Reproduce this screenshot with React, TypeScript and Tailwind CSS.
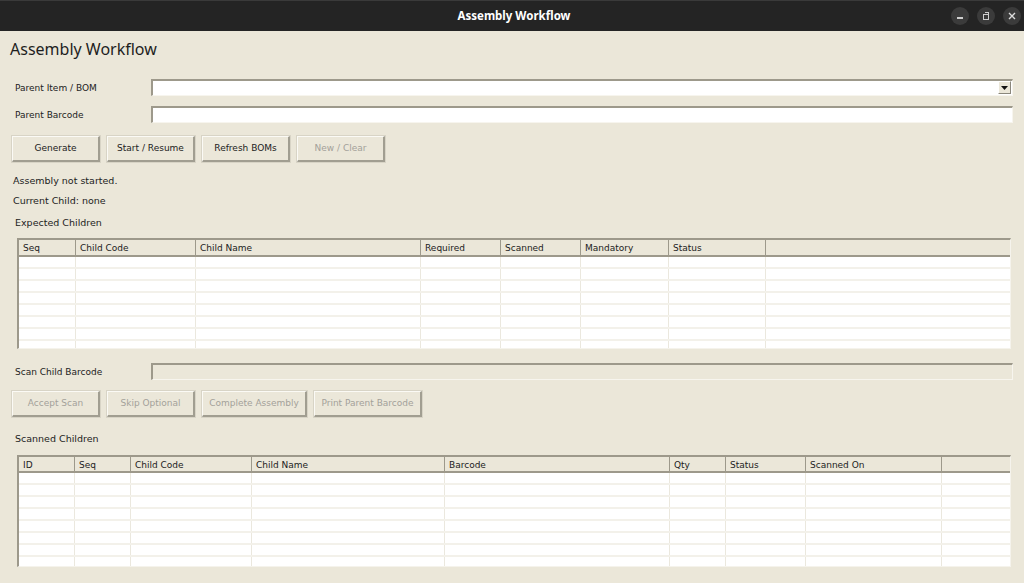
import React from "react";

const FONT = { fontFamily: '"DejaVu Sans", "Liberation Sans", sans-serif' };

function Entry({ disabled, combo }: { disabled?: boolean; combo?: boolean }) {
  return (
    <div
      className={`flex-1 h-[17px] border-t-2 border-l-2 border-t-[#9d998b] border-l-[#9d998b] border-b border-r border-b-[#f7f5ee] border-r-[#f7f5ee] flex justify-end ${
        disabled ? "bg-[#ebe7d9]" : "bg-white"
      }`}
    >
      {combo && (
        <div className="w-[13px] h-[13px] mt-[0px] mr-[1px] bg-[#ebe7d9] border border-t-white border-l-white border-b-[#8a877c] border-r-[#8a877c] flex items-center justify-center">
          <svg width="7" height="4" viewBox="0 0 7 4">
            <polygon points="0,0 7,0 3.5,4" fill="#111" />
          </svg>
        </div>
      )}
    </div>
  );
}

function Btn({ label, w, disabled }: { label: string; w: number; disabled?: boolean }) {
  return (
    <div
      className={`h-[26px] flex items-center justify-center bg-[#ebe7d9] border-t border-l border-t-[#fbfaf5] border-l-[#fbfaf5] border-b-2 border-r-2 border-b-[#a19e91] border-r-[#a19e91] outline outline-1 outline-[#d8d4c6] text-[9px] ${
        disabled ? "text-[#a3a199]" : "text-[#222]"
      }`}
      style={{ width: w }}
    >
      {label}
    </div>
  );
}

function Table({ cols, height, headerH }: { cols: [string, number | null][]; height: number; headerH: number }) {
  const rows = Array.from({ length: 9 });
  return (
    <div
      className="mx-[17px] w-[994px] border-t-2 border-l-2 border-t-[#9d998b] border-l-[#9d998b] border-b border-r border-b-[#f5f3ec] border-r-[#f5f3ec] bg-white flex flex-col overflow-hidden"
      style={{ height }}
    >
      <div className="flex bg-[#ebe7d9] border-b-2 border-b-[#9d998b] shrink-0" style={{ height: headerH }}>
        {cols.map(([name, w], i) => (
          <div
            key={i}
            className={`flex items-center pl-[4px] pt-[3px] text-[9px] text-[#222] border-r border-r-[#9d998b] ${w === null ? "flex-1 border-r-0" : "shrink-0"}`}
            style={w === null ? {} : { width: w }}
          >
            {name}
          </div>
        ))}
      </div>
      <div className="flex-1 overflow-hidden">
        {rows.map((_, r) => (
          <div key={r} className="flex h-[12px] border-b-2 border-b-[#f3f1ea]">
            {cols.map(([_n, w], i) => (
              <div
                key={i}
                className={`border-r border-r-[#ebe8de] ${w === null ? "flex-1 border-r-0" : "shrink-0"}`}
                style={w === null ? {} : { width: w }}
              />
            ))}
          </div>
        ))}
      </div>
    </div>
  );
}

export default function App() {
  return (
    <div className="w-[1024px] h-[583px] overflow-hidden bg-[#ebe7d9] flex flex-col" style={FONT}>
      {/* Title bar */}
      <div className="h-[31px] shrink-0 bg-[#242424] border-t border-t-[#3a3a3a] flex items-center relative">
        <div
          className="flex-1 text-center text-white text-[11.5px] font-bold pl-[4px]"
          style={{ fontFamily: '"Noto Sans", "Open Sans", sans-serif' }}
        >
          Assembly Workflow
        </div>
        <div className="absolute right-[3px] top-[6px] flex gap-[8px]">
          <div className="w-[18px] h-[18px] rounded-full bg-[#3b3b3b] flex items-center justify-center">
            <div className="w-[6px] h-[2px] bg-[#cfcfcf] mt-[4px]" />
          </div>
          <div className="w-[18px] h-[18px] rounded-full bg-[#3b3b3b] flex items-center justify-center relative">
            <div className="w-[6px] h-[6px] border border-[#cfcfcf] mt-[1px]" />
            <div className="absolute w-[4px] h-[4px] border-t border-r border-[#cfcfcf] left-[8px] top-[5px]" />
          </div>
          <div className="w-[18px] h-[18px] rounded-full bg-[#3b3b3b] flex items-center justify-center">
            <svg width="8" height="8" viewBox="0 0 8 8">
              <path d="M1 1 L7 7 M7 1 L1 7" stroke="#dcdcdc" strokeWidth="1.4" />
            </svg>
          </div>
        </div>
      </div>

      {/* Heading */}
      <div
        className="h-[36px] shrink-0 flex items-center pl-[10px] text-[16px] text-[#1e1e1e]"
        style={{ fontFamily: '"Noto Sans", "Open Sans", sans-serif' }}
      >
        Assembly Workflow
      </div>

      {/* Form */}
      <div className="mt-[12px] flex items-center pr-[11px]">
        <div className="w-[151px] pl-[15px] pt-[3px] text-[9px] text-[#222] shrink-0">Parent Item / BOM</div>
        <Entry combo />
      </div>
      <div className="mt-[10px] flex items-center pr-[11px]">
        <div className="w-[151px] pl-[15px] pt-[3px] text-[9px] text-[#222] shrink-0">Parent Barcode</div>
        <Entry />
      </div>

      <div className="mt-[13px] flex gap-[7px] pl-[12px]">
        <Btn label="Generate" w={88} />
        <Btn label="Start / Resume" w={88} />
        <Btn label="Refresh BOMs" w={88} />
        <Btn label="New / Clear" w={88} disabled />
      </div>

      <div className="mt-[9px] h-[20px] flex items-center pl-[13px] text-[9.5px] text-[#222]">Assembly not started.</div>
      <div className="h-[20px] flex items-center pl-[13px] text-[9.5px] text-[#222]">Current Child: none</div>
      <div className="mt-[2px] h-[20px] flex items-center pl-[15px] text-[9.5px] text-[#222]">Expected Children</div>

      <div className="mt-[5px]">
        <Table
          height={111}
          headerH={17}
          cols={[
            ["Seq", 57],
            ["Child Code", 120],
            ["Child Name", 225],
            ["Required", 80],
            ["Scanned", 80],
            ["Mandatory", 88],
            ["Status", 97],
            ["", null],
          ]}
        />
      </div>

      <div className="mt-[14px] flex items-center pr-[11px]">
        <div className="w-[151px] pl-[15px] text-[9px] text-[#222] shrink-0 pt-[3px]">Scan Child Barcode</div>
        <Entry disabled />
      </div>

      <div className="mt-[11px] flex gap-[7px] pl-[12px]">
        <Btn label="Accept Scan" w={88} disabled />
        <Btn label="Skip Optional" w={88} disabled />
        <Btn label="Complete Assembly" w={105} disabled />
        <Btn label="Print Parent Barcode" w={108} disabled />
      </div>

      <div className="mt-[12px] h-[20px] flex items-center pl-[15px] text-[9.5px] text-[#222]">Scanned Children</div>

      <div className="mt-[6px]">
        <Table
          height={112}
          headerH={16}
          cols={[
            ["ID", 56],
            ["Seq", 56],
            ["Child Code", 121],
            ["Child Name", 193],
            ["Barcode", 225],
            ["Qty", 56],
            ["Status", 80],
            ["Scanned On", 136],
            ["", null],
          ]}
        />
      </div>
    </div>
  );
}
